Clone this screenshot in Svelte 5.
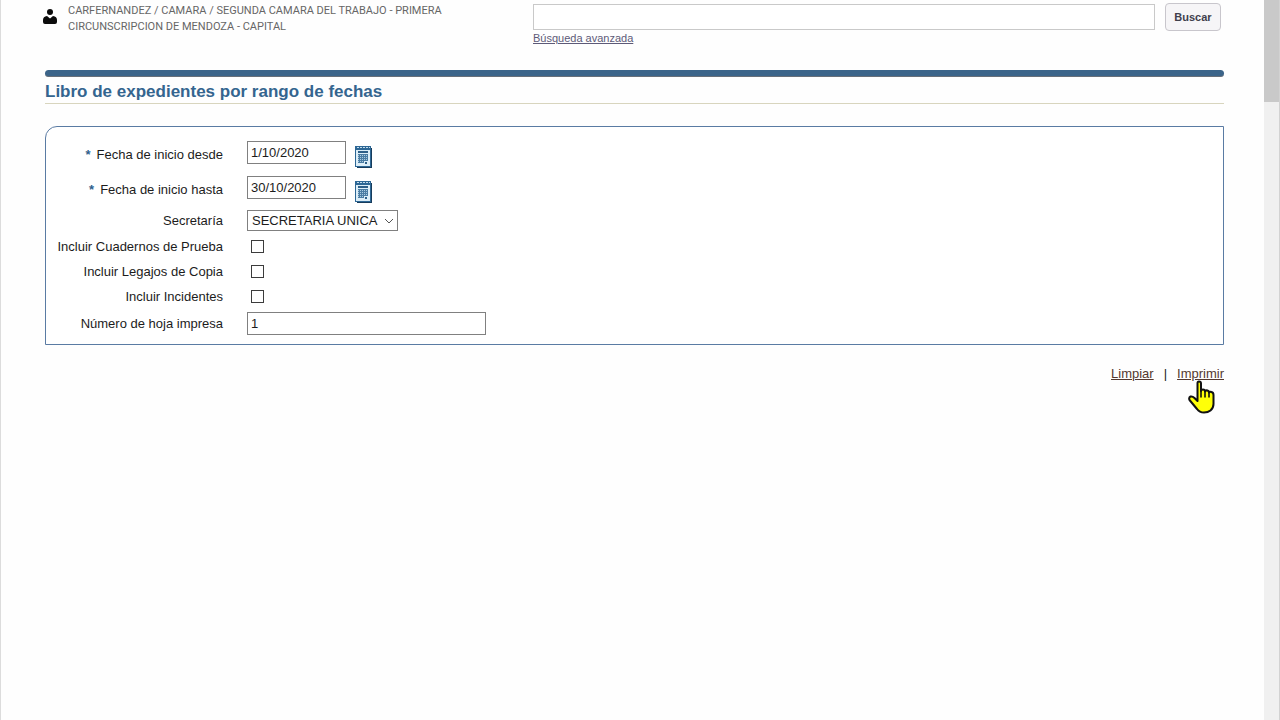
<script lang="ts">
  let query = $state("");
  let from = $state("1/10/2020");
  let to = $state("30/10/2020");
  let office = $state("SECRETARIA UNICA");
  let sheet = $state("1");
  let includes = $state([
    { id: "cuadernos", label: "Incluir Cuadernos de Prueba", checked: false },
    { id: "legajos", label: "Incluir Legajos de Copia", checked: false },
    { id: "incidentes", label: "Incluir Incidentes", checked: false },
  ]);

  function reset(e: MouseEvent) {
    e.preventDefault();
    from = "";
    to = "";
    sheet = "";
    for (const item of includes) item.checked = false;
  }

  function print(e: MouseEvent) {
    e.preventDefault();
    window.print();
  }
</script>

{#snippet calendar()}
  <svg width="18" height="22" viewBox="0 0 18 22" aria-hidden="true">
    <path d="M2 2H17V22H2z" fill="#173c5c" />
    <path d="M0 1H16V21H0z" fill="#2d6795" />
    <path d="M1 4H15V20H1z" fill="#dceef8" />
    <path d="M0 0H16V4H0z" fill="#2d6795" />
    <path d="M2 1.5H15" stroke="#c3dded" stroke-dasharray="2 1" />
    <path d="M3 6H13" stroke="#2d5f88" stroke-width="2" />
    <path d="M3 8H13V15H9V17H3z" fill="#4a7ca3" />
    <path d="M3 9.5H13M3 11.5H13M3 13.5H13M3 15.5H9" stroke="#a9cbe0" stroke-dasharray="1 1" />
    <path d="M10 16H12V18H10z" fill="#2d5f88" />
  </svg>
{/snippet}

<div class="screen">
  <main class="page">
    <header class="top">
      <div class="user">
        <svg class="avatar" width="16" height="17" viewBox="0 0 16 17" aria-hidden="true">
          <circle cx="8" cy="4" r="3" fill="#0c0c0c" />
          <path d="M1 14V12Q1 8.5 5 8L8 10.5L11 8Q15 8.5 15 12V14Q15 16 13 16H3Q1 16 1 14z" fill="#0c0c0c" />
        </svg>
        <span>CARFERNANDEZ / CAMARA / SEGUNDA CAMARA DEL TRABAJO - PRIMERA CIRCUNSCRIPCION DE MENDOZA - CAPITAL</span>
      </div>
      <form class="search" onsubmit={(e) => e.preventDefault()}>
        <div class="search-box">
          <input type="text" aria-label="Buscar expediente" bind:value={query} />
          <a href="#avanzada">Búsqueda avanzada</a>
        </div>
        <button type="submit">Buscar</button>
      </form>
    </header>

    <div class="bar"></div>
    <h1>Libro de expedientes por rango de fechas</h1>

    <form class="panel" onsubmit={(e) => e.preventDefault()}>
      <div class="row date">
        <label for="desde"><span class="req">*</span>Fecha de inicio desde</label>
        <div class="field">
          <input id="desde" type="text" bind:value={from} />
          <button type="button" class="cal" aria-label="Elegir fecha desde">{@render calendar()}</button>
        </div>
      </div>
      <div class="row date">
        <label for="hasta"><span class="req">*</span>Fecha de inicio hasta</label>
        <div class="field">
          <input id="hasta" type="text" bind:value={to} />
          <button type="button" class="cal" aria-label="Elegir fecha hasta">{@render calendar()}</button>
        </div>
      </div>
      <div class="row office">
        <label for="secretaria">Secretaría</label>
        <div class="select">
          <select id="secretaria" bind:value={office}>
            <option>SECRETARIA UNICA</option>
          </select>
          <svg width="10" height="6" viewBox="0 0 10 6" aria-hidden="true">
            <path d="M1 1L5 5L9 1" fill="none" stroke="#555" />
          </svg>
        </div>
      </div>
      {#each includes as item (item.id)}
        <div class="row check">
          <label for={item.id}>{item.label}</label>
          <input id={item.id} type="checkbox" bind:checked={item.checked} />
        </div>
      {/each}
      <div class="row sheet">
        <label for="hoja">Número de hoja impresa</label>
        <input id="hoja" type="text" bind:value={sheet} />
      </div>
    </form>

    <nav class="actions">
      <a href="#limpiar" onclick={reset}>Limpiar</a>
      <span>|</span>
      <a class="print" href="#imprimir" onclick={print}>
        Imprimir
        <svg class="pointer" width="28" height="34" viewBox="0 0 28 34" aria-hidden="true">
          <path
            d="M9.5 3Q9.5 1.5 11 1.5Q13 1.5 13 3.5V11Q13 9.5 15 9.5Q17 9.5 17 11.5Q17.5 10 19.5 10.5Q21 11 21 12.5Q22 11.5 23.5 12Q25.5 12.5 25.5 15V24Q25.5 28 22.5 30.5Q20 32.5 16 32.5Q11.5 32.5 9 29L1.5 20Q.5 17.5 2.5 16.5Q4.5 16 6.5 18L9.5 21z"
            fill="#ffff08" stroke="#111" stroke-width="2" stroke-linejoin="round"
          />
          <path d="M13 10V17M17 11V17M21 12V17" stroke="#111" stroke-width="1.6" stroke-linecap="round" />
        </svg>
      </a>
    </nav>
  </main>
  <div class="scrollbar"><div class="thumb"></div></div>
</div>

<style>
  :global(body) { margin: 0; background: #fefefe; }
  .screen {
    display: flex; min-height: 100vh; box-sizing: border-box;
    border-left: 1px solid #dcdcdc; border-right: 1px solid #d2d2d2;
    font-family: "Liberation Sans", Arial, sans-serif; font-size: 13px; color: #1c1c1c;
  }
  .page { flex: 1; min-width: 0; padding: 3px 40px 0 44px; }
  .scrollbar { width: 15px; background: #f0f0f0; }
  .thumb { height: 102px; background: #c9c9c9; }
  input, select, button { font: inherit; color: inherit; box-sizing: border-box; margin: 0; }

  .top { display: flex; justify-content: space-between; height: 67px; }
  .user { display: flex; gap: 10px; width: 410px; font-family: Roboto, sans-serif; font-size: 11px; line-height: 16px; color: #666; }
  .avatar { flex: none; margin: 5px 0 0 -3px; }
  .search { display: flex; align-items: flex-start; gap: 10px; width: 691px; padding-right: 3px; box-sizing: border-box; }
  .search-box { flex: 1; display: flex; flex-direction: column; align-items: flex-start; }
  .search-box input { width: 100%; height: 26px; border: 1px solid #c9c9c9; background: #fff; padding: 0 4px; margin-top: 1px; }
  .search-box a { font-size: 11px; line-height: 16px; color: #5d5a78; }
  .search button {
    width: 56px; height: 28px; border: 1px solid #c8c6cc; border-radius: 4px;
    background: #f6f5f7; color: #3f404c; font-size: 11px; font-weight: bold; padding: 0;
  }

  .bar { height: 7px; border-radius: 4px; background: #3b6489; border-bottom: 1px solid #676f79; box-sizing: border-box; }
  h1 { margin: 0; font-size: 17px; line-height: 20px; color: #34658f; padding: 5px 0 1px; border-bottom: 1px solid #d8d5be; }

  .panel { margin-top: 22px; padding: 10px 0 6px; border: 1px solid #5a7ba3; border-top-left-radius: 12px; background: #fff; }
  .row { display: grid; grid-template-columns: 177px 1fr; column-gap: 24px; align-items: center; justify-items: start; }
  .row label { justify-self: end; line-height: 16px; white-space: nowrap; }
  .req { color: #2f5f8c; font-weight: bold; margin-right: 6px; }
  .row input[type="text"] { height: 23px; border: 1px solid #808080; background: #fff; padding: 0 3px; }
  .date { height: 35px; }
  .office { height: 27px; }
  .check { height: 25px; }
  .sheet { height: 29px; }
  .field { display: flex; align-items: flex-start; gap: 9px; height: 27px; }
  .field input { width: 99px; }
  .cal { border: 0; padding: 5px 0 0; background: none; line-height: 0; cursor: pointer; }
  .select { position: relative; }
  select { appearance: none; height: 21px; width: 151px; border: 1px solid #808080; border-radius: 0; background: #fff; padding: 0 4px; }
  .select svg { position: absolute; right: 4px; top: 8px; pointer-events: none; }
  input[type="checkbox"] { appearance: none; width: 13px; height: 13px; border: 1px solid #3c3c3c; background: #fff; margin-left: 4px; }
  input[type="checkbox"]:checked { box-shadow: inset 0 0 0 2px #fff; background: #3c3c3c; }
  .row.sheet input { width: 239px; }

  .actions { display: flex; justify-content: flex-end; gap: 10px; margin-top: 21px; line-height: 16px; }
  .actions a { color: #54392f; }
  .print { position: relative; }
  .pointer { position: absolute; left: 11px; top: 14px; }
</style>
